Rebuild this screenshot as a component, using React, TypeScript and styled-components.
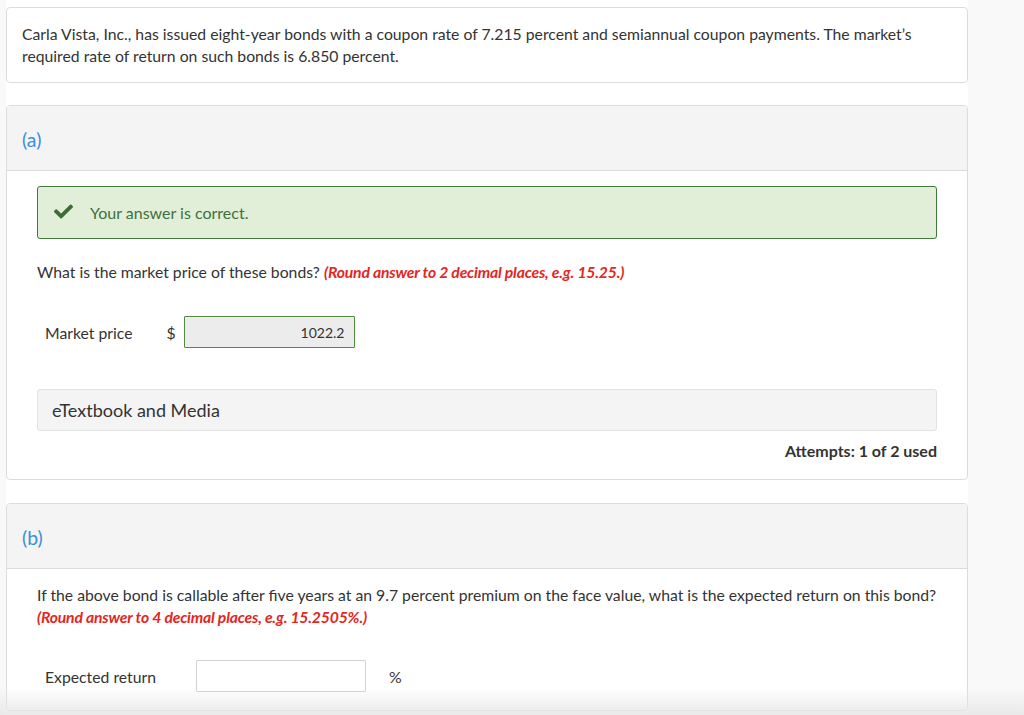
import React, { ReactElement } from 'react';
import styled, { createGlobalStyle } from 'styled-components';
import { FaCheck } from 'react-icons/fa';

const FONT = `Lato, "Open Sans", "Liberation Sans", sans-serif`;
const BORDER = '#dcdcdc';
const TEXT = '#333333';
const RED = '#e4261e';
const BLUE = '#3a8edb';
const BODY_SIZE = 15.75;

const GlobalStyle = createGlobalStyle`
    html, body {
        margin: 0;
        padding: 0;
        background: #f9f9f9;
        font-family: ${FONT};
        color: ${TEXT};
    }
    * {
        box-sizing: border-box;
    }
`;

type AnswerRowProps = {
    label: string;
    labelGap: number;
    currency?: string;
    unit?: string;
    value?: string;
    correct?: boolean;
    inputWidth: number;
};

function AnswerRow({ label, labelGap, currency, unit, value, correct, inputWidth }: AnswerRowProps): ReactElement {
    return (
        <Row>
            <Label gap={labelGap}>{label}</Label>
            {currency && <Currency>{currency}</Currency>}
            <Input readOnly value={value ?? ''} correct={correct} style={{ width: inputWidth }} />
            {unit && <Unit>{unit}</Unit>}
        </Row>
    );
}

export default function App(): ReactElement {
    return (
        <>
            <GlobalStyle />
            <Page>
                <Column>
                    <IntroCard>
                        Carla Vista, Inc., has issued eight-year bonds with a coupon rate of 7.215 percent and
                        semiannual coupon payments. The market’s required rate of return on such bonds is 6.850
                        percent.
                    </IntroCard>

                    <PartCard>
                        <PartHeader>(a)</PartHeader>
                        <PartBody>
                            <Feedback>
                                <FaCheck size={19} />
                                <span>Your answer is correct.</span>
                            </Feedback>
                            <Question top={22}>
                                What is the market price of these bonds?{' '}
                                <Hint>(Round answer to 2 decimal places, e.g. 15.25.)</Hint>
                            </Question>
                            <RowWrap top={33}>
                                <AnswerRow
                                    label="Market price"
                                    labelGap={34}
                                    currency="$"
                                    value="1022.2"
                                    correct
                                    inputWidth={171}
                                />
                            </RowWrap>
                            <Resources>eTextbook and Media</Resources>
                            <Attempts>Attempts: 1 of 2 used</Attempts>
                        </PartBody>
                    </PartCard>

                    <PartCard>
                        <PartHeader>(b)</PartHeader>
                        <PartBody>
                            <Question top={0}>
                                If the above bond is callable after five years at an 9.7 percent premium on the face
                                value, what is the expected return on this bond?{' '}
                                <Hint>(Round answer to 4 decimal places, e.g. 15.2505%.)</Hint>
                            </Question>
                            <RowWrap top={32}>
                                <AnswerRow label="Expected return" labelGap={40} unit="%" inputWidth={170} />
                            </RowWrap>
                        </PartBody>
                    </PartCard>
                </Column>
                <BottomFade />
            </Page>
        </>
    );
}

const Page = styled.div`
    min-height: 715px;
    padding-left: 6px;
`;

const Column = styled.main`
    width: 962px;
    min-height: 715px;
    background: #ffffff;
    padding-top: 7px;
    display: flex;
    flex-direction: column;
    gap: 22px;
`;

const IntroCard = styled.section`
    border: 1px solid ${BORDER};
    border-radius: 4px;
    padding: 15px 14px 15px 15px;
    font-size: ${BODY_SIZE}px;
    line-height: 22px;
    color: ${TEXT};
`;

const PartCard = styled.section`
    border: 1px solid ${BORDER};
    border-radius: 4px;
    overflow: hidden;

    & + & {
        margin-top: 1px;
    }
`;

const PartHeader = styled.header`
    height: 65px;
    background: #f4f4f4;
    border-bottom: 1px solid ${BORDER};
    display: flex;
    align-items: center;
    padding: 2px 15px 0;
    font-size: 19.5px;
    color: ${BLUE};
`;

const PartBody = styled.div`
    padding: 15px 30px 18px 30px;
    font-size: ${BODY_SIZE}px;
`;

const Feedback = styled.div`
    height: 53px;
    display: flex;
    align-items: center;
    gap: 17px;
    padding-left: 16px;
    background: #e1efd9;
    border: 1px solid #3f7a3b;
    border-radius: 3px;
    color: #3f6f3a;
    font-size: 16px;

    svg {
        color: #3d6c35;
        margin-top: -3px;
    }
`;

const Question = styled.p<{ top: number }>`
    margin: ${(p) => p.top}px -6px 0 0;
    line-height: 22px;
    color: ${TEXT};
`;

const Hint = styled.span`
    color: ${RED};
    font-weight: 700;
    font-style: italic;
    letter-spacing: -0.2px;
`;

const RowWrap = styled.div<{ top: number }>`
    margin-top: ${(p) => p.top}px;
`;

const Row = styled.div`
    display: flex;
    align-items: center;
    padding-left: 8px;
    height: 32px;
`;

const Label = styled.span<{ gap: number }>`
    margin-right: ${(p) => p.gap}px;
    color: ${TEXT};
`;

const Currency = styled.span`
    width: 18px;
    color: ${TEXT};
`;

const Input = styled.input<{ correct?: boolean }>`
    height: 32px;
    border: 1px solid ${(p) => (p.correct ? '#4f8a3f' : '#d2d2d2')};
    background: ${(p) => (p.correct ? '#ececec' : '#ffffff')};
    border-radius: 1px;
    text-align: right;
    padding: 0 10px;
    font-family: ${FONT};
    font-size: 14px;
    color: ${TEXT};
    outline: none;
`;

const Unit = styled.span`
    margin-left: 23px;
    color: ${TEXT};
`;

const Resources = styled.div`
    margin-top: 41px;
    height: 42px;
    display: flex;
    align-items: center;
    padding-left: 14px;
    background: #f4f4f4;
    border: 1px solid #e2e2e2;
    border-radius: 3px;
    font-size: 18px;
    color: ${TEXT};
`;

const Attempts = styled.div`
    margin-top: 10px;
    text-align: right;
    font-weight: 700;
    font-size: 16px;
    line-height: 20px;
    color: ${TEXT};
`;

const BottomFade = styled.div`
    position: fixed;
    left: 0;
    right: 0;
    bottom: 0;
    height: 28px;
    background: linear-gradient(to bottom, rgba(235, 235, 235, 0), rgba(230, 230, 230, 0.85));
    pointer-events: none;
`;
